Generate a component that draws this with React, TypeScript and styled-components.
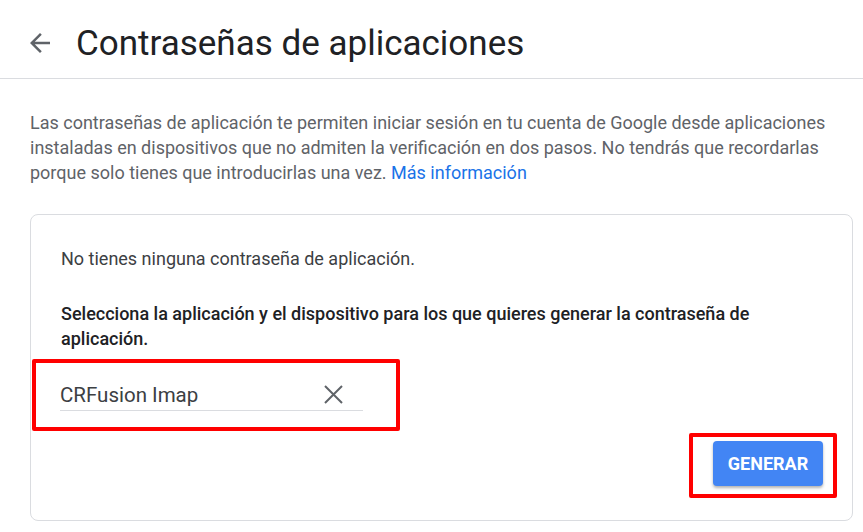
import React from 'react'
import styled, { createGlobalStyle } from 'styled-components'

const GlobalStyle = createGlobalStyle`
	body {
		margin: 0;
		background: #fff;
		font-family: Roboto, "Liberation Sans", Arial, sans-serif;
	}
`

const Page = styled.div`
	width: 863px;
	height: 532px;
	overflow: hidden;
`

const Header = styled.header`
	height: 79px;
	display: flex;
	align-items: center;
	border-bottom: 1px solid #dadce0;
	padding: 8px 0 0 25px;
	box-sizing: border-box;
`

const BackButton = styled.span`
	width: 30px;
	height: 30px;
	display: flex;
	margin-right: 21px;
	color: #5f6368;
`

const Title = styled.h1`
	margin: 0;
	font-size: 35px;
	font-weight: 400;
	color: #202124;
`

const Body = styled.main`
	padding: 31px 10px 0 30px;
`

const Intro = styled.p`
	margin: 0;
	font-size: 18px;
	line-height: 25px;
	color: #5f6368;
`

const Link = styled.a`
	color: #1a73e8;
	text-decoration: none;
`

const Card = styled.section`
	margin-top: 29px;
	border: 1px solid #dadce0;
	border-radius: 8px;
	padding: 31px 30px 0 30px;
	height: 307px;
	box-sizing: border-box;
	display: flex;
	flex-direction: column;
`

const Text = styled.p<{ $strong?: boolean }>`
	margin: 0;
	font-size: 18px;
	line-height: 25px;
	color: ${(p) => (p.$strong ? '#202124' : '#3c4043')};
	font-weight: ${(p) => (p.$strong ? 500 : 400)};
`

const Spacer = styled.div<{ $h: number }>`
	height: ${(p) => p.$h}px;
`

const Highlight = styled.div<{ $pad: string }>`
	border: 4px solid #ff0000;
	border-radius: 2px;
	padding: ${(p) => p.$pad};
	display: inline-flex;
`

const InputRow = styled.div`
	margin-left: -29px;
	display: flex;
`

const Field = styled.div`
	width: 303px;
	height: 40px;
	display: flex;
	align-items: center;
	justify-content: space-between;
	border-bottom: 1px solid #dadce0;
	box-sizing: border-box;
	padding-top: 8px;
`

const FieldValue = styled.span`
	font-size: 20.5px;
	color: #3c4043;
`

const ClearIcon = styled.span`
	width: 19px;
	height: 19px;
	display: flex;
	color: #5f6368;
	margin-right: 20px;
`

const Actions = styled.div`
	display: flex;
	justify-content: flex-end;
	margin-right: -15px;
	margin-top: 2px;
`

const Button = styled.button`
	width: 110px;
	height: 45px;
	padding: 0;
	border: none;
	border-radius: 4px;
	background: #4285f4;
	color: #fff;
	font-family: Roboto, "Liberation Sans", Arial, sans-serif;
	font-size: 18px;
	font-weight: 700;
	box-shadow: 0 2px 3px rgba(0, 0, 0, 0.3);
	cursor: pointer;
`

export default function App() {
	return (
		<Page>
			<GlobalStyle />
			<Header>
				<BackButton>
					<svg width="30" height="30" viewBox="0 0 24 24">
						<path fill="currentColor" d="M20 11H7.83l5.59-5.59L12 4l-8 8 8 8 1.41-1.41L7.83 13H20v-2z" />
					</svg>
				</BackButton>
				<Title>Contraseñas de aplicaciones</Title>
			</Header>
			<Body>
				<Intro>
					Las contraseñas de aplicación te permiten iniciar sesión en tu cuenta de Google desde aplicaciones
					instaladas en dispositivos que no admiten la verificación en dos pasos. No tendrás que recordarlas
					porque solo tienes que introducirlas una vez. <Link href="#">Más información</Link>
				</Intro>
				<Card>
					<Text>No tienes ninguna contraseña de aplicación.</Text>
					<Spacer $h={30} />
					<Text $strong>
						Selecciona la aplicación y el dispositivo para los que quieres generar la contraseña de aplicación.
					</Text>
					<Spacer $h={8} />
					<InputRow>
						<Highlight $pad="8px 33px 16px 24px">
							<Field>
								<FieldValue>CRFusion Imap</FieldValue>
								<ClearIcon>
									<svg width="19" height="19" viewBox="0 0 19 19">
										<path d="M1 1 18 18M18 1 1 18" stroke="currentColor" strokeWidth="2" fill="none" />
									</svg>
								</ClearIcon>
							</Field>
						</Highlight>
					</InputRow>
					<Actions>
						<Highlight $pad="4px 10px 8px 20px">
							<Button>GENERAR</Button>
						</Highlight>
					</Actions>
				</Card>
			</Body>
		</Page>
	)
}
